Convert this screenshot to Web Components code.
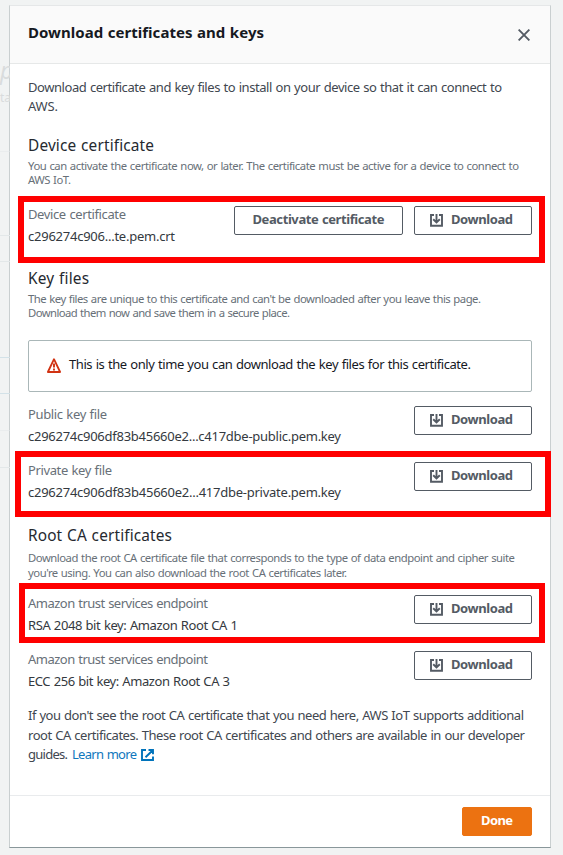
<!DOCTYPE html>
<html lang="en">
<head>
<meta charset="utf-8">
<title>Download certificates and keys</title>
<style>
html,body{margin:0;height:100%;overflow:hidden}
body{background:#f1f3f3;font-family:"Noto Sans","Open Sans",sans-serif;font-size:13px;color:#414750}
</style>
</head>
<body>
<cert-page></cert-page>
<script>
const define=(name,html,after)=>{
  const t=document.createElement('template');t.innerHTML=html;
  customElements.define(name,class extends HTMLElement{
    constructor(){super();this.attachShadow({mode:'open'}).append(t.content.cloneNode(true));}
    connectedCallback(){if(after)after.call(this,this.shadowRoot);}
  });
};
/* One line of text, tracked so that it spans the width given in w. */
define('text-line',`<style>
:host{display:block;white-space:nowrap;line-height:19px;word-spacing:.6px}
:host([kind=title]){font-size:15px;font-weight:700;color:#16191f;line-height:20px;margin-top:-1px}
:host([kind=heading]){font-size:15.4px;color:#25292f;line-height:20px}
:host([kind=desc]){font-size:11.300px;color:#687078;line-height:14px}
:host([kind=label]){color:#687078;line-height:22px}
:host([kind=value]){color:#343940;line-height:22px}
:host([kind=alert]){color:#16191f;margin-top:-1px}
:host([kind=button]){font-weight:700;color:inherit;line-height:20px}
:host([kind=link]){color:#0f77bd}
span{display:inline-block}
</style><span><slot></slot></span>`,function(root){
  const w=+this.getAttribute('w'),s=root.querySelector('span');
  if(w){const n=this.textContent.length;s.style.letterSpacing=((w-s.getBoundingClientRect().width)/(n-1))+'px';s.style.width=w+'px';}
});
define('icon-download',`<style>:host{display:block;width:13px;height:13px}svg{display:block}</style>
<svg width="13" height="13" viewBox="0 0 13 13" fill="none" stroke="#545b64" stroke-width="1.9"><path d="M4 1H1v10.800h11V1H9"/><path d="M6.500 .1v8M3.200 5.200l3.300 3.200 3.300-3.200"/></svg>`);
define('icon-warning',`<style>:host{display:block;width:14px;height:15px}svg{display:block}</style>
<svg width="14" height="15" viewBox="0 0 14 15" fill="none" stroke="#d13212"><path stroke-width="1.800" stroke-linejoin="round" d="M7 1.200L13.100 14H.9Z"/><path stroke-width="1.9" d="M7 5.500v4M7 10.600v1.800"/></svg>`);
define('icon-close',`<style>:host{display:block;width:12px;height:12px}svg{display:block}</style>
<svg width="12" height="12" viewBox="0 0 12 12" fill="none" stroke="#545b64" stroke-width="1.9"><path d="M.6.6l10.800 10.800M11.400.6L.6 11.400"/></svg>`);
define('icon-external',`<style>:host{display:block;width:13px;height:12px}svg{display:block}</style>
<svg width="13" height="12" viewBox="0 0 13 12" fill="none" stroke="#0073bb" stroke-width="1.9"><path d="M5 1H1v10h11V7.500M7.500 1H12v4.200M11.800 1.200L4.500 8.300"/></svg>`);
define('outline-button',`<style>
:host{display:flex;box-sizing:border-box;height:29px;border:1px solid #545b64;border-radius:2px;background:#fff;color:#545b64;justify-content:center;align-items:flex-start;padding-top:2px}
:host([primary]){background:#ec7211;border-color:#ec7211;color:#fff}
</style><slot></slot>`);
define('download-button',`<style>:host{display:block;width:118px}outline-button{justify-content:flex-start;padding-left:15px}icon-download{margin:5px 8px 0 0}</style>
<outline-button><icon-download></icon-download><text-line kind="button" w="62">Download</text-line></outline-button>`);
define('file-row',`<style>
:host{display:flex;height:44px;margin-bottom:12px}
.info{flex:1}.actions{display:flex;gap:11px;padding-top:3px}
</style><div class="info"><slot></slot></div><div class="actions"><slot name="action"></slot><download-button></download-button></div>`);
define('alert-box',`<style>
:host{display:flex;box-sizing:border-box;height:52px;border:1px solid #aab7b8;border-radius:2px;padding:15px 0 0 18px;gap:8px}
icon-warning{margin-top:2px}
</style><icon-warning></icon-warning><slot></slot>`);
define('mark-box',`<style>:host{position:absolute;box-sizing:border-box;border:6px solid #f00}</style>`);
define('page-backdrop',`<style>
:host{position:absolute;inset:0 auto 0 0;width:10px;overflow:hidden;color:#d9dcdd}
i,span,b{position:absolute;left:0}
i{top:54px;font-size:23px;line-height:32px;left:0}
span{top:90px;font-size:12px;line-height:16px}
b{width:10px;height:1px;background:#e3e8e9}
</style><i>p</i><span>ta</span><b style="top:151px;opacity:.5"></b><b style="top:235px"></b><b style="top:261px"></b><b style="top:357px;background:#d3e2e8"></b><b style="top:393px;background:#d3e2e8"></b><b style="top:430px;opacity:.5"></b><b style="top:467px"></b>`);
define('modal-dialog',`<style>
:host{display:flex;flex-direction:column;box-sizing:border-box;width:542px;height:843px;background:#fff;border:1px solid #c9cfd0;border-top-color:#e5e7e8;border-bottom-color:#89979a}
header{box-sizing:border-box;height:58px;background:#fafafa;border-bottom:1px solid #e6e8e8;display:flex;justify-content:space-between;padding:17px 20px 0 18px}
main{flex:1;padding:14px 18px 0}
footer{box-sizing:border-box;height:52px;border-top:1px solid #e9ebed;display:flex;justify-content:flex-end;padding:11px 18px 0}
</style><header><slot name="header"></slot></header><main><slot></slot></main><footer><slot name="footer"></slot></footer>`);
define('cert-page',`<style>
:host{display:block;position:relative;box-sizing:border-box;height:855px;padding:5px 0 0 9px;overflow:hidden}
icon-close{margin-top:6px}
section{display:flow-root}
.device{margin-top:20px}.key{margin-top:10px}.root{margin-top:11px}
.device file-row{margin-top:16px}
alert-box{margin:20px 0 11px}
.root>.gap{margin-top:1px}
.root file-row:first-of-type{margin-top:12px}
.more{margin-top:2px}
.learn{display:flex}
.learn icon-external{margin:4px 0 0 4px}
.primary{width:70px}
</style>
<page-backdrop></page-backdrop>
<modal-dialog>
 <text-line slot="header" kind="title" w="236">Download certificates and keys</text-line>
 <icon-close slot="header"></icon-close>
 <text-line w="474">Download certificate and key files to install on your device so that it can connect to</text-line>
 <text-line w="30">AWS.</text-line>
 <section class="device">
  <text-line kind="heading" w="126">Device certificate</text-line>
  <div style="height:3px"></div>
  <text-line kind="desc" w="491">You can activate the certificate now, or later. The certificate must be active for a device to connect to</text-line>
  <text-line kind="desc" w="43">AWS IoT.</text-line>
  <file-row>
   <text-line kind="label" w="98">Device certificate</text-line>
   <text-line kind="value" w="147">c296274c906...te.pem.crt</text-line>
   <outline-button slot="action" style="width:169px"><text-line kind="button" w="132">Deactivate certificate</text-line></outline-button>
  </file-row>
 </section>
 <section class="key">
  <text-line kind="heading" w="61">Key files</text-line>
  <div style="height:3px"></div>
  <text-line kind="desc" w="453">The key files are unique to this certificate and can't be downloaded after you leave this page.</text-line>
  <text-line kind="desc" w="262">Download them now and save them in a secure place.</text-line>
  <alert-box><text-line kind="alert" w="402">This is the only time you can download the key files for this certificate.</text-line></alert-box>
  <file-row>
   <text-line kind="label" w="79">Public key file</text-line>
   <text-line kind="value" w="313">c296274c906df83b45660e2...c417dbe-public.pem.key</text-line>
  </file-row>
  <file-row>
   <text-line kind="label" w="84">Private key file</text-line>
   <text-line kind="value" w="313">c296274c906df83b45660e2...417dbe-private.pem.key</text-line>
  </file-row>
 </section>
 <section class="root">
  <text-line kind="heading" w="144">Root CA certificates</text-line>
  <div style="height:5px"></div>
  <text-line kind="desc" w="487">Download the root CA certificate file that corresponds to the type of data endpoint and cipher suite</text-line>
  <text-line class="gap" kind="desc" w="319">you're using. You can also download the root CA certificates later.</text-line>
  <file-row>
   <text-line kind="label" w="180">Amazon trust services endpoint</text-line>
   <text-line kind="value" w="210">RSA 2048 bit key: Amazon Root CA 1</text-line>
  </file-row>
  <file-row>
   <text-line kind="label" w="180">Amazon trust services endpoint</text-line>
   <text-line kind="value" w="202">ECC 256 bit key: Amazon Root CA 3</text-line>
  </file-row>
 </section>
 <text-line class="more" w="496">If you don't see the root CA certificate that you need here, AWS IoT supports additional</text-line>
 <text-line style="margin-top:1px" w="497">root CA certificates. These root CA certificates and others are available in our developer</text-line>
 <div class="learn"><text-line w="40">guides.</text-line><text-line kind="link" w="65" style="margin-left:4px">Learn more</text-line><icon-external></icon-external></div>
 <outline-button slot="footer" primary class="primary"><text-line kind="button" w="32">Done</text-line></outline-button>
</modal-dialog>
<mark-box style="left:18px;top:196px;width:527px;height:67px"></mark-box>
<mark-box style="left:15px;top:451px;width:536px;height:66px"></mark-box>
<mark-box style="left:19px;top:583px;width:526px;height:60px"></mark-box>`);
</script>
</body>
</html>
